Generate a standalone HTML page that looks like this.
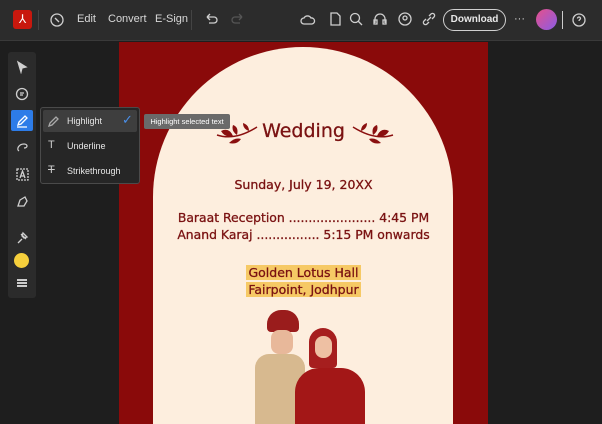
<!DOCTYPE html>
<html><head><style>
*{margin:0;padding:0;box-sizing:border-box}
html,body{width:602px;height:424px;overflow:hidden}
body{background:#1e1e1e;font-family:"Liberation Sans",sans-serif;position:relative}
.top{position:absolute;left:0;top:0;width:602px;height:41px;background:#2c2c2c;border-bottom:1px solid #3a3a3a}
.t{position:absolute;color:#d8d8d8;font-size:11px;top:13px}
.ic{position:absolute;stroke:#cfcfcf;fill:none;stroke-width:1.3}
.side{position:absolute;left:8px;top:52px;width:28px;height:246px;background:#2b2b2b;border-radius:3px}
.page{position:absolute;left:119px;top:42px;width:369px;height:382px;background:#8a0a0a;overflow:hidden}
.arch{position:absolute;left:34px;top:5px;width:300px;height:377px;background:#fdeede;border-radius:150px 150px 0 0}
.c{position:absolute;left:0;width:369px;text-align:center;color:#7a1212;font-family:"DejaVu Sans","Liberation Sans",sans-serif;-webkit-text-stroke:0.3px #7a1212}
.menu{position:absolute;left:40px;top:107px;width:100px;height:77px;background:#262626;border:1px solid #4a4a4a;border-radius:3px}
.mi{position:absolute;left:26px;color:#e6e6e6;font-size:9px}
.tip{position:absolute;left:144px;top:114px;width:86px;height:15px;background:#6a6a6a;border-radius:2px;color:#fff;font-size:7.5px;line-height:15px;text-align:center}
</style></head><body>
<div class="top">
<div style="position:absolute;left:13px;top:10px;width:19px;height:19px;background:#c8180e;border-radius:3px;color:#fff;font-size:12px;text-align:center;line-height:19px">⅄</div>
<div style="position:absolute;left:38px;top:10px;width:1px;height:20px;background:#444"></div>
<svg class="ic" style="left:49px;top:12px" width="16" height="16"><circle cx="8" cy="8" r="6"/><path d="M6 6l4 4"/></svg>
<span class="t" style="left:77px">Edit</span>
<span class="t" style="left:108px">Convert</span>
<span class="t" style="left:155px">E-Sign</span>
<div style="position:absolute;left:191px;top:10px;width:1px;height:20px;background:#444"></div>
<svg class="ic" style="left:203px;top:12px" width="16" height="16"><path d="M4 5h7a3 3 0 010 6H6M4 5l3-3M4 5l3 3"/></svg>
<svg class="ic" style="left:230px;top:12px;stroke:#555" width="16" height="16"><path d="M12 5H5a3 3 0 000 6h5M12 5L9 2M12 5L9 8"/></svg>
<svg class="ic" style="left:300px;top:12px" width="16" height="16"><path d="M4 12a3 3 0 010-6 4 4 0 017 0 3 3 0 011 6z"/></svg>
<svg class="ic" style="left:328px;top:11px" width="14" height="16"><path d="M3 2h6l3 3v9H3z"/></svg>
<svg class="ic" style="left:348px;top:11px" width="16" height="16"><circle cx="7" cy="7" r="4.5"/><path d="M10 10l4 4"/></svg>
<svg class="ic" style="left:372px;top:11px" width="16" height="16"><path d="M3 12V8a5 5 0 0110 0v4"/><rect x="2" y="9" width="3" height="4"/><rect x="11" y="9" width="3" height="4"/></svg>
<svg class="ic" style="left:397px;top:11px" width="16" height="16"><circle cx="8" cy="8" r="6"/><circle cx="8" cy="7" r="2"/></svg>
<svg class="ic" style="left:421px;top:11px" width="16" height="16"><path d="M6 10l4-4M5 8l-2 2a2 2 0 003 3l2-2M11 8l2-2a2 2 0 00-3-3L8 5"/></svg>
<div style="position:absolute;left:443px;top:9px;width:63px;height:22px;border:1.5px solid #d0d0d0;border-radius:11px;color:#e8e8e8;font-size:10px;font-weight:bold;text-align:center;line-height:19px">Download</div>
<span class="t" style="left:514px;top:13px">···</span>
<div style="position:absolute;left:536px;top:9px;width:21px;height:21px;border-radius:50%;background:linear-gradient(135deg,#e6508a,#8a5ce6)"></div>
<div style="position:absolute;left:562px;top:11px;width:1px;height:18px;background:#ccc"></div>
<svg class="ic" style="left:571px;top:12px" width="16" height="16"><circle cx="8" cy="8" r="6"/><path d="M6.5 6.5a1.5 1.5 0 113 0c0 1-1.5 1-1.5 2.5"/></svg>
</div>
<div class="side">
<svg class="ic" style="left:7px;top:8px" width="14" height="14"><path d="M3 2l8 5-4 1-1 4z" fill="#cfcfcf"/></svg>
<svg class="ic" style="left:6px;top:34px" width="16" height="16"><circle cx="8" cy="8" r="5.5"/><path d="M6 7h4M6 9h3"/></svg>
<div style="position:absolute;left:3px;top:58px;width:22px;height:21px;background:#2d7ce8;border-radius:2px"></div>
<svg class="ic" style="left:7px;top:61px;stroke:#fff" width="15" height="15"><path d="M3 12l1-3 6-6 2 2-6 6zM2 14h10"/></svg>
<svg class="ic" style="left:7px;top:88px" width="15" height="14"><path d="M4 11c-3-2 0-7 5-7 4 0 4 4 0 4"/></svg>
<svg class="ic" style="left:7px;top:115px" width="15" height="15"><rect x="2" y="2" width="11" height="11" stroke-dasharray="2 1"/><path d="M5 11l2.5-7 2.5 7M6 9h3"/></svg>
<svg class="ic" style="left:7px;top:142px" width="15" height="15"><path d="M3 12l2-6 5-3 2 4-3 5z"/></svg>
<svg class="ic" style="left:7px;top:178px" width="15" height="15"><path d="M3 13l4-4M6 4l5 5M8 3l4 4-3 1-2-2z"/></svg>
<div style="position:absolute;left:6px;top:201px;width:15px;height:15px;border-radius:50%;background:#f5cf3c"></div>
<div style="position:absolute;left:9px;top:227px;width:10px;height:8px;border-top:2px solid #ccc;border-bottom:2px solid #ccc"><div style="margin-top:1px;height:2px;background:#ccc"></div></div>
</div>
<div class="page">
<div class="arch"></div>
<svg style="position:absolute;left:96px;top:77px" width="44" height="30" fill="#8a0f0f"><path d="M2 16 Q20 22 42 8" stroke="#8a0f0f" stroke-width="1.5" fill="none"/><path d="M6 12q8-4 12 5q-8 2-12-5z"/><path d="M14 24q6-6 12-4q-4 6-12 4z"/><path d="M18 6q6 2 4 10q-6-4-4-10z"/><path d="M28 4q6 2 6 8q-6-2-6-8z"/></svg>
<svg style="position:absolute;left:232px;top:77px;transform:scaleX(-1)" width="44" height="30" fill="#8a0f0f"><path d="M2 16 Q20 22 42 8" stroke="#8a0f0f" stroke-width="1.5" fill="none"/><path d="M6 12q8-4 12 5q-8 2-12-5z"/><path d="M14 24q6-6 12-4q-4 6-12 4z"/><path d="M18 6q6 2 4 10q-6-4-4-10z"/><path d="M28 4q6 2 6 8q-6-2-6-8z"/></svg>
<div class="c" style="top:78px;font-size:19px">Wedding</div>
<div class="c" style="top:135px;font-size:12.5px">Sunday, July 19, 20XX</div>
<div class="c" style="top:167px;font-size:12.4px;line-height:17px">Baraat Reception ...................... 4:45 PM<br>Anand Karaj ................ 5:15 PM onwards</div>
<div class="c" style="top:222px;font-size:12.5px;line-height:17px"><span style="background:#f6c965;padding:0 2px">Golden Lotus Hall</span><br><span style="background:#f6c965;padding:0 2px">Fairpoint, Jodhpur</span></div>
<div style="position:absolute;left:148px;top:268px;width:32px;height:22px;background:#9a1c1c;border-radius:14px 14px 4px 4px"></div>
<div style="position:absolute;left:152px;top:288px;width:22px;height:24px;background:#e8b89a;border-radius:8px"></div>
<div style="position:absolute;left:136px;top:312px;width:50px;height:70px;background:#d7b98f;border-radius:14px 14px 0 0"></div>
<div style="position:absolute;left:190px;top:286px;width:28px;height:40px;background:#a61e1e;border-radius:14px 14px 4px 4px"></div>
<div style="position:absolute;left:196px;top:294px;width:17px;height:22px;background:#eec0a3;border-radius:8px"></div>
<div style="position:absolute;left:176px;top:326px;width:70px;height:56px;background:#a31717;border-radius:24px 24px 0 0"></div>
</div>
<div class="menu">
<div style="position:absolute;left:2px;top:2px;width:94px;height:22px;background:#3e3e3e;border-radius:2px"></div>
<svg class="ic" style="left:6px;top:6px;stroke:#aaa" width="14" height="14"><path d="M2 12l1-3 6-6 2 2-6 6z"/></svg>
<span class="mi" style="top:8px">Highlight</span>
<span style="position:absolute;left:81px;top:4px;color:#4a90ea;font-size:13px">✓</span>
<span style="position:absolute;left:7px;top:31px;color:#ccc;font-size:11px">T</span>
<span class="mi" style="top:33px">Underline</span>
<span style="position:absolute;left:7px;top:56px;color:#ccc;font-size:11px;text-decoration:line-through">T</span>
<span class="mi" style="top:58px">Strikethrough</span>
</div>
<div class="tip">Highlight selected text</div>
</body></html>
